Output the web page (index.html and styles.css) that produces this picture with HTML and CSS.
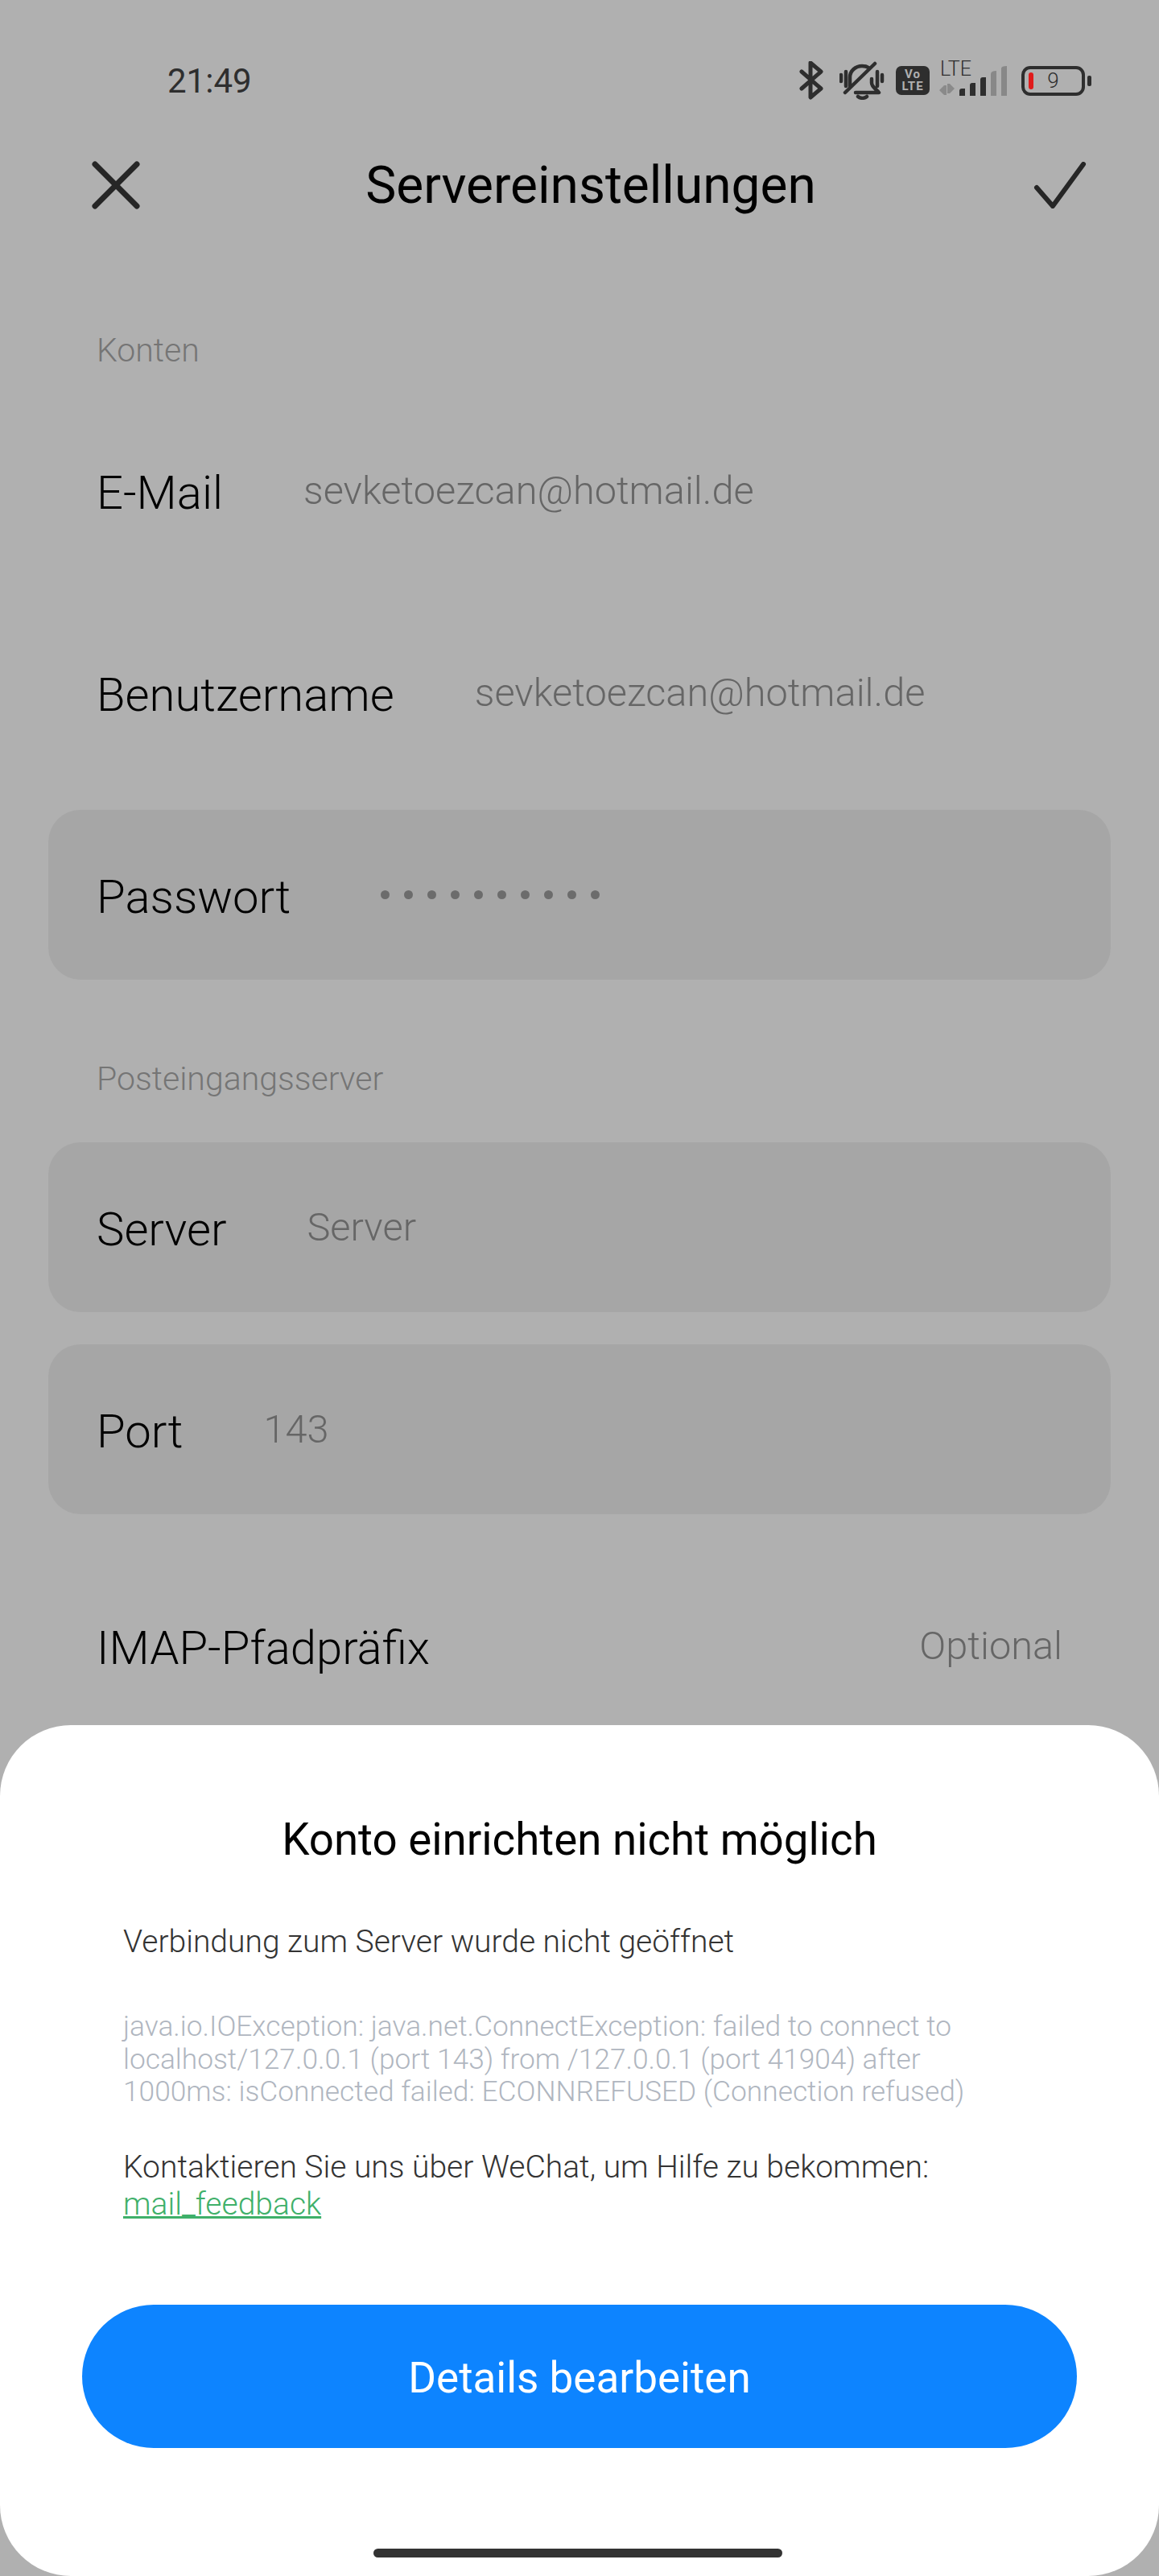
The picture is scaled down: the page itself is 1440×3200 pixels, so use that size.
FILE: index.html
```html
<!DOCTYPE html>
<html lang="de">
<head>
    <meta charset="utf-8">
    <title>Servereinstellungen</title>
    <link rel="stylesheet" href="styles.css">
</head>
<body>
    <div class="screen">
        <div class="status">
            <span class="time">21:49</span>
            <div class="status-icons">
                <svg class="ic-bt" width="30" height="48" viewBox="0 0 30 48"><path d="M3 13L27 34L14 45V2L27 13L3 34"/></svg>
                <svg class="ic-bell" width="56" height="48" viewBox="0 0 56 48"><path d="M2 17V25M8 13V31M47 13V31M53 17V25M44 3L7 39M13 32V20C13 12 20 6 28 6C31 6 34 6.5 36 8M40 22V27C40 32 46 35 49 39H20M23 44C26 46.5 31 46.5 34 44"/></svg>
                <div class="volte"><span>Vo</span><span>LTE</span></div>
                <div class="net">
                    <span class="net-lte">LTE</span>
                    <svg width="64" height="38" viewBox="0 0 64 38"><path class="net-arrow" d="M9 36V24H6L0 30L6 36ZM10 22V34H13L19 28L13 22Z"/><path class="bar-on" d="M25 37V31Q25 28 28 28H32V37ZM38 37V24Q38 21 41 21H45V37ZM51 37V17Q51 14 54 14H58V37Z"/></svg>
                    <svg class="bars-off" width="26" height="38" viewBox="0 0 26 38"><path d="M1 37V10Q1 6 8 6V37ZM14 37V3Q14 0 21 0V37Z"/></svg>
                </div>
                <div class="battery">
                    <div class="battery-body"><i class="battery-level"></i><span>9</span></div>
                    <i class="battery-nub"></i>
                </div>
            </div>
        </div>

        <div class="header">
            <svg class="ic-nav" width="60" height="60" viewBox="0 0 60 60"><path d="M4 4L56 56M56 4L4 56"/></svg>
            <h1>Servereinstellungen</h1>
            <svg class="ic-nav ic-check" width="66" height="58" viewBox="0 0 66 58"><path d="M4 32L24 55L62 3"/></svg>
        </div>

        <div class="form">
            <div class="section-label">Konten</div>
            <div class="row"><span class="label">E-Mail</span><span class="value">sevketoezcan@hotmail.de</span></div>
            <div class="row"><span class="label">Benutzername</span><span class="value">sevketoezcan@hotmail.de</span></div>
            <div class="row card">
                <span class="label">Passwort</span>
                <span class="dots"><i></i><i></i><i></i><i></i><i></i><i></i><i></i><i></i><i></i><i></i></span>
            </div>

            <div class="section-label second">Posteingangsserver</div>
            <div class="row card"><span class="label">Server</span><span class="value">Server</span></div>
            <div class="row card"><span class="label">Port</span><span class="value">143</span></div>
            <div class="row imap"><span class="label">IMAP-Pfadpräfix</span><span class="value">Optional</span></div>
        </div>

        <div class="sheet">
            <h2>Konto einrichten nicht möglich</h2>
            <p class="msg">Verbindung zum Server wurde nicht geöffnet</p>
            <p class="error">java.io.IOException: java.net.ConnectException: failed to connect to<br>localhost/127.0.0.1 (port 143) from /127.0.0.1 (port 41904) after<br>1000ms: isConnected failed: ECONNREFUSED (Connection refused)</p>
            <p class="contact">Kontaktieren Sie uns über WeChat, um Hilfe zu bekommen:<br><a href="#">mail_feedback</a></p>
            <button class="primary">Details bearbeiten</button>
            <div class="home-bar"></div>
        </div>
    </div>
</body>
</html>
```

FILE: styles.css
```css
* { box-sizing: border-box; }
body { margin: 0; font-family: Roboto, "Liberation Sans", sans-serif; font-weight: 300; }
h1, h2, p { margin: 0; font-weight: 400; }

.screen { position: relative; width: 1440px; height: 3200px; overflow: hidden; background-color: #b0b0b0; color: #000; }

/* status bar */
.status { height: 150px; padding: 50px 84px 0 208px; display: flex; align-items: center; justify-content: space-between; }
.time { font-size: 42px; color: #2e2e2e; font-weight: 400; }
.status-icons { display: flex; align-items: center; }
.status-icons svg { display: block; fill: none; stroke: #2e2e2e; stroke-width: 5; stroke-linecap: round; stroke-linejoin: round; }
.status-icons .ic-bell { margin-left: 20px; stroke-width: 4.5; }
.volte { width: 42px; height: 36px; margin-left: 14px; border-radius: 7px; background-color: #2e2e2e; color: #b0b0b0; font-size: 15px; line-height: 15px; font-weight: 700; letter-spacing: 1px; display: flex; flex-direction: column; align-items: center; justify-content: center; }
.volte span { display: block; }
.net { position: relative; width: 90px; height: 42px; margin-left: 12px; padding-bottom: 1px; display: flex; align-items: flex-end; }
.net svg { flex: none; }
.net-lte { position: absolute; left: 1px; top: -7px; font-size: 25px; line-height: 28px; color: #2e2e2e; }
.status-icons .net-arrow { fill: #8a8a8a; stroke: none; }
.status-icons .bar-on { fill: #2e2e2e; stroke: none; }
.status-icons .bars-off { fill: #888; stroke: none; margin-left: -1px; }
.battery { margin-left: 12px; display: flex; align-items: center; gap: 3px; }
.battery-body { position: relative; width: 79px; height: 37px; border: 4px solid #2e2e2e; border-radius: 11px; display: flex; align-items: center; justify-content: center; font-size: 26px; color: #2e2e2e; }
.battery-level { position: absolute; left: 5px; top: 4px; width: 6px; height: 21px; border-radius: 3px; background-color: #e01b1b; }
.battery-nub { display: block; width: 5px; height: 13px; border-radius: 2px; background-color: #2e2e2e; }

/* header */
.header { height: 160px; padding: 0 90px 0 114px; display: flex; align-items: center; justify-content: space-between; position: relative; }
.ic-nav { display: block; fill: none; stroke: #262626; stroke-width: 7; stroke-linecap: round; stroke-linejoin: round; }
.ic-check { stroke-width: 6; }
h1 { position: absolute; left: 28px; right: 0; text-align: center; font-size: 64px; }

/* form */
.form { display: flex; flex-direction: column; gap: 40px; padding: 95px 60px 0; }
.section-label { height: 60px; line-height: 60px; padding-left: 60px; font-size: 41px; color: #757575; margin-bottom: -1px; }
.section-label.second { margin-top: 53px; margin-bottom: 9px; }
.row { height: 211px; padding: 0 60px; display: flex; align-items: center; flex: none; }
.card { background-color: #a6a6a6; border-radius: 40px; }
.label { font-size: 58px; margin-top: 4px; }
.value { margin-left: 100px; font-size: 48.7px; color: #666; }
.imap { justify-content: space-between; margin-top: 18px; }
.imap .value { margin-left: 0; }
.dots { margin-left: 112px; display: flex; gap: 18px; }
.dots i { display: block; width: 11px; height: 11px; border-radius: 50%; background-color: #6c6c6c; }

/* dialog */
.sheet { position: absolute; left: 0; right: 0; top: 2143px; height: 1057px; padding: 106px 102px 0; border-radius: 88px; background-color: #fff; display: flex; flex-direction: column; }
h2 { font-size: 54.7px; line-height: 72px; text-align: center; }
.msg { margin: 68px 51px 0; font-size: 39px; line-height: 46px; color: #333; font-weight: 300; }
.error { margin: 62px 51px 0; font-size: 35.3px; line-height: 40.7px; color: #b0b6c0; font-weight: 300; white-space: nowrap; }
.contact { margin: 50px 51px 0; font-size: 39px; line-height: 46px; color: #333; font-weight: 300; }
.contact a { color: #3fb06a; }
.primary { margin-top: 102px; height: 178px; padding-top: 4px; border: 0; border-radius: 89px; background-color: #0d84ff; color: #fff; font-family: inherit; font-size: 53px; font-weight: 400; }
.home-bar { width: 508px; height: 11px; margin: 125px auto 0; border-radius: 6px; background-color: #333; transform: translateX(-2px); }
```
